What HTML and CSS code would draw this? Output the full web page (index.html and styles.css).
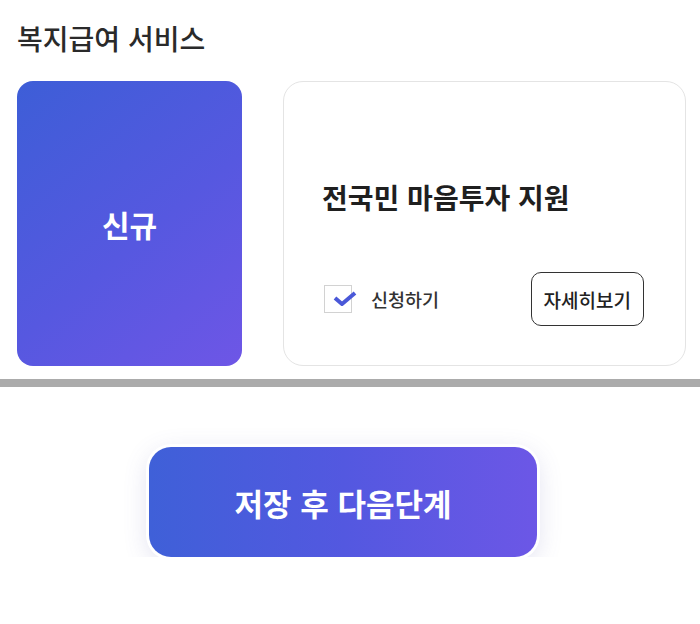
FILE: index.html
```html
<!DOCTYPE html>
<html lang="ko">
<head>
  <meta charset="UTF-8">
  <title>복지급여 서비스</title>
  <link rel="stylesheet" href="styles.css">
</head>
<body>

  <!-- 복지급여 서비스 -->
  <section class="service">
    <h2 class="service-title">복지급여 서비스</h2>

    <div class="service-row">
      <div class="badge-card">신규</div>

      <div class="info-card">
        <h3 class="info-title">전국민 마음투자 지원</h3>
        <div class="info-actions">
          <label class="apply">
            <span class="check-box">
              <svg viewBox="0 0 24 16" width="24" height="16">
                <path d="M2 7 L9 13 L22 2" fill="none" stroke="#4a58d8" stroke-width="4" stroke-linejoin="round"/>
              </svg>
            </span>
            <span class="apply-text">신청하기</span>
          </label>
          <button class="detail-btn">자세히보기</button>
        </div>
      </div>
    </div>
  </section>

  <div class="divider"></div>

  <!-- 다음단계 -->
  <div class="next-wrap">
    <button class="next-btn">저장 후 다음단계</button>
  </div>

</body>
</html>
```

FILE: styles.css
```css
* {
  margin: 0;
  padding: 0;
  box-sizing: border-box;
}

body {
  font-family: "Noto Sans CJK KR", "Noto Sans", sans-serif;
  color: #222;
  background: #fff;
}

.service {
  padding: 20px 14px 13px 17px;
}

.service-title {
  font-size: 28px;
  font-weight: 500;
  line-height: 36px;
  color: #2a2a2a;
  margin-bottom: 25px;
}

.service-row {
  display: flex;
  gap: 41px;
}

.badge-card {
  width: 225px;
  height: 285px;
  border-radius: 16px;
  background: linear-gradient(140deg, #3d5ed7 0%, #5658e0 55%, #6e56e6 100%);
  color: #fff;
  font-size: 30px;
  font-weight: 700;
  display: flex;
  align-items: center;
  justify-content: center;
}

.info-card {
  flex: 1;
  height: 285px;
  border: 1px solid #e4e4e4;
  border-radius: 20px;
  padding: 97px 41px 40px 38px;
}

.info-title {
  font-size: 28px;
  font-weight: 700;
  line-height: 36px;
  color: #1f1f1f;
  margin-bottom: 57px;
}

.info-actions {
  display: flex;
  align-items: center;
  justify-content: space-between;
}

.apply {
  display: flex;
  align-items: center;
  gap: 19px;
  padding-left: 2px;
}

.check-box {
  position: relative;
  width: 28px;
  height: 28px;
  border: 1px solid #d2d2d2;
  background: #fff;
}

.check-box svg {
  position: absolute;
  left: 8px;
  top: 5px;
}

.apply-text {
  font-size: 18.5px;
  font-weight: 500;
  color: #333;
}

.detail-btn {
  height: 54px;
  padding: 0 12px;
  border: 1px solid #333;
  border-radius: 10px;
  background: #fff;
  font-family: inherit;
  font-size: 19px;
  font-weight: 500;
  color: #222;
}

.divider {
  height: 8px;
  background: #ababab;
}

.next-wrap {
  display: flex;
  justify-content: center;
  padding: 60px 14px 0 0;
}

.next-btn {
  width: 388px;
  height: 110px;
  border: none;
  border-radius: 22px;
  background: linear-gradient(90deg, #3f60d8 0%, #5358e0 50%, #6c57e6 100%);
  box-shadow: 0 0 0 3px #fff, 0 6px 26px rgba(90, 90, 170, 0.2);
  color: #fff;
  font-family: inherit;
  font-size: 31px;
  font-weight: 700;
}
```
